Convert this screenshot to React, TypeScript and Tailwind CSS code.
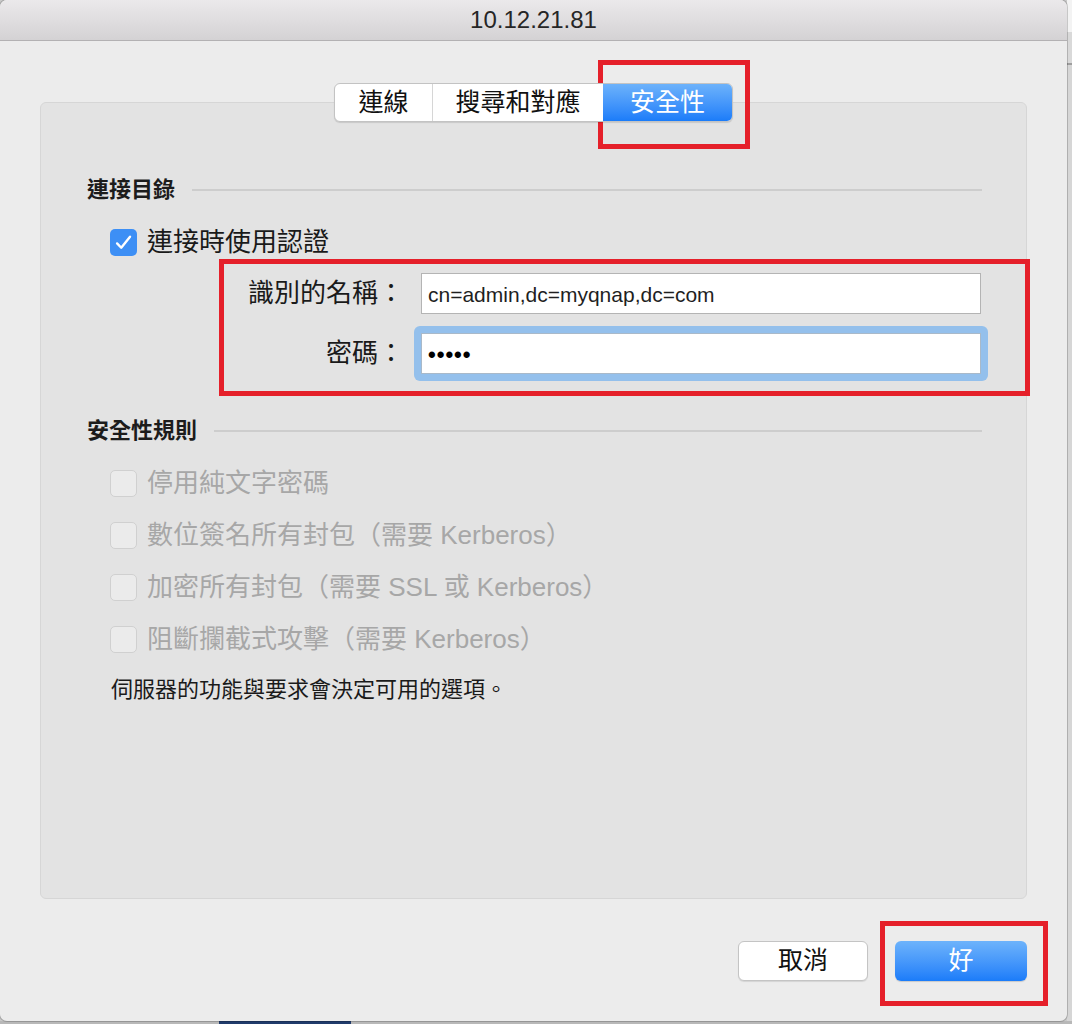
const rules = [
  '停用純文字密碼',
  '數位簽名所有封包（需要 Kerberos）',
  '加密所有封包（需要 SSL 或 Kerberos）',
  '阻斷攔截式攻擊（需要 Kerberos）',
];

function CheckMark() {
  return (
    <svg className="h-[19px] w-[19px]" viewBox="0 0 16 16" fill="none">
      <path d="M2.6 8.8 6.1 12.4 13.5 3.2" stroke="white" strokeWidth="2" strokeLinecap="round" strokeLinejoin="round" />
    </svg>
  );
}

function SectionHeader({ title }: { title: string }) {
  return (
    <div className="flex h-[28px] items-center gap-[17px] pl-[46px] pr-[44px]">
      <span className="text-[22px] font-semibold leading-[28px] text-[#1c1c1c]">{title}</span>
      <div className="h-[2px] flex-1 bg-[#cdcdcd]" />
    </div>
  );
}

function Window() {
  return (
    <div className="relative flex h-[1021px] w-[1067px] flex-col overflow-hidden rounded-[7px] bg-[#ececec] shadow-[0_0_0_1px_rgba(0,0,0,0.18)]">
      {/* title bar */}
      <div className="flex h-[41px] shrink-0 items-center justify-center border-b border-[#b3b1b3] bg-linear-to-b from-[#ebe9eb] to-[#d4d2d4] text-[24px] text-[#262626]">
        10.12.21.81
      </div>

      <div className="flex flex-1 flex-col px-[40px]">
        {/* segmented tabs */}
        <div className="relative z-10 mt-[42px] flex justify-center">
          <div className="flex h-[39px] overflow-hidden rounded-[6px] border border-[#c3c3c3] bg-white text-[25px] shadow-[0_1px_1px_rgba(0,0,0,0.12)]">
            <div className="flex w-[98px] items-center justify-center border-r border-[#d6d6d6] text-[#111]">連線</div>
            <div className="flex w-[170px] items-center justify-center text-[#111]">搜尋和對應</div>
            <div className="flex w-[129px] items-center justify-center bg-linear-to-b from-[#6cb2fb] to-[#1a7cf9] text-white">安全性</div>
          </div>
        </div>

        {/* panel */}
        <div className="-mt-[20px] flex h-[797px] flex-col rounded-[6px] border border-[#d6d6d6] bg-[#e3e3e3] pt-[73px]">
          <SectionHeader title="連接目錄" />

          <div className="mt-[22px] flex h-[32px] items-center gap-[10px] pl-[69px]">
            <div className="flex h-[27px] w-[27px] items-center justify-center rounded-[5px] bg-[#3d8ff5]">
              <CheckMark />
            </div>
            <span className="text-[26px] leading-[32px] text-[#1a1a1a]">連接時使用認證</span>
          </div>

          <div className="mt-[15px] grid grid-cols-[363px_560px] items-center gap-x-[17px] gap-y-[19px]">
            <span className="text-right text-[26px] text-[#1a1a1a]">識別的名稱：</span>
            <div className="flex h-[41px] items-center border border-[#b4b4b4] bg-white px-[6px] pt-[2px] font-['Liberation_Sans',sans-serif] text-[21px] text-[#1f1f1f]">
              cn=admin,dc=myqnap,dc=com
            </div>
            <span className="text-right text-[26px] text-[#1a1a1a]">密碼：</span>
            <div className="relative h-[41px]">
              <div className="absolute -inset-[7px] rounded-[6px] bg-[#94c0ec]" />
              <div className="relative flex h-[41px] items-center border border-[#a9b9c9] bg-white px-[6px] pt-[2px] font-['Liberation_Sans',sans-serif] text-[22px] font-bold tracking-[1px] text-black">
                •••••
              </div>
            </div>
          </div>

          <div className="mt-[43px]">
            <SectionHeader title="安全性規則" />
          </div>

          <div className="mt-[22px] flex flex-col gap-[20px] pl-[69px]">
            {rules.map((rule) => (
              <div key={rule} className="flex h-[32px] items-center gap-[10px]">
                <div className="h-[27px] w-[27px] rounded-[5px] border border-[#d0d0d0] bg-[#ebebeb]" />
                <span className="text-[26px] leading-[32px] text-[#a7a7a7]">{rule}</span>
              </div>
            ))}
          </div>

          <p className="mt-[21px] pl-[70px] text-[22px] leading-[28px] text-[#1a1a1a]">伺服器的功能與要求會決定可用的選項。</p>
        </div>

        {/* buttons */}
        <div className="mt-[42px] flex justify-end gap-[27px]">
          <button className="flex h-[40px] w-[130px] items-center justify-center rounded-[6px] border border-[#c4c4c4] bg-white text-[25px] text-[#111] shadow-[0_1px_1px_rgba(0,0,0,0.1)]">
            取消
          </button>
          <button className="flex h-[40px] w-[132px] items-center justify-center rounded-[6px] bg-linear-to-b from-[#6db3fb] to-[#1a7cf9] text-[25px] text-white shadow-[0_1px_1px_rgba(0,0,0,0.15)]">
            好
          </button>
        </div>
      </div>

      {/* red annotation boxes */}
      <div className="absolute left-[598px] top-[60px] h-[89px] w-[152px] border-[5px] border-[#e5202a]" />
      <div className="absolute left-[219px] top-[259px] h-[137px] w-[811px] border-[5px] border-[#e5202a]" />
      <div className="absolute left-[880px] top-[921px] h-[85px] w-[168px] border-[5px] border-[#e5202a]" />
    </div>
  );
}

export default function App() {
  return (
    <div className="flex h-[1024px] w-[1072px] flex-col overflow-hidden bg-[#c9c9c9] font-['Liberation_Sans','Noto_Sans_CJK_TC',sans-serif]">
      <div className="flex h-[1021px] shrink-0">
        <Window />
        <div className="flex w-[5px] flex-col">
          <div className="h-[32px] bg-[#f3f3f3]" />
          <div className="h-[31px] bg-[#d9d9d9]" />
          <div className="h-[2px] bg-[#9e9e9e]" />
          <div className="flex-1 bg-[#d6d6d6]" />
        </div>
      </div>
      <div className="flex h-[3px]">
        <div className="w-[219px] bg-[#b8b8b8]" />
        <div className="w-[132px] bg-[#203b6b]" />
        <div className="flex-1 bg-[#b8b8b8]" />
      </div>
    </div>
  );
}
